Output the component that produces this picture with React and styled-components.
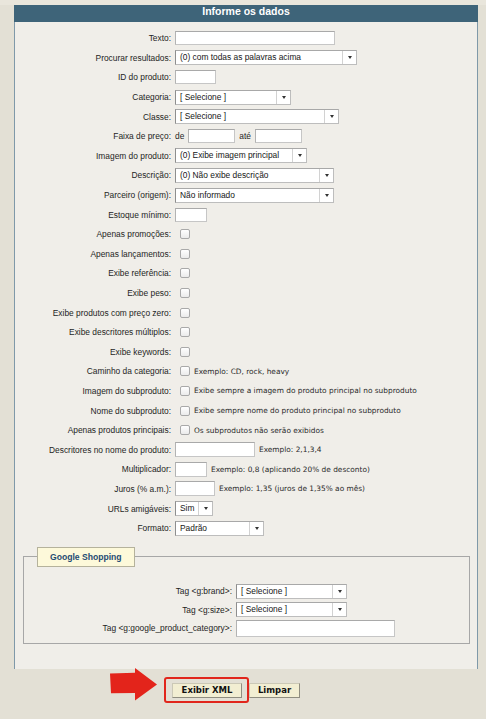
import React from "react";
import styled, { createGlobalStyle } from "styled-components";

const Global = createGlobalStyle`
  html, body { margin: 0; padding: 0; background: #e3e0d5; }
  body { font-family: "Liberation Sans", Arial, sans-serif; }
  #root { width: 486px; }
`;

const Page = styled.div`
  width: 486px;
  height: 719px;
  overflow: hidden;
  box-sizing: border-box;
  background: #e3e0d5;
  border-top: 5px solid #e9e6dc;
`;

const Panel = styled.section`
  width: 464px;
  margin-left: 14px;
  background: #f0eee9;
`;

const Header = styled.h2`
  margin: 0;
  height: 17px;
  line-height: 17px;
  background: #3e6479;
  color: #ffffff;
  text-align: center;
  font: bold 10.5px "Liberation Sans", Arial, sans-serif;
`;

const Body = styled.div`
  border-left: 1px solid #7f99a9;
  border-right: 1px solid #7f99a9;
  padding: 6.5px 0 24.5px;
`;

const Grid = styled.div`
  display: grid;
  grid-template-columns: ${(p) => p.$label}px 1fr;
  column-gap: ${(p) => p.$gap}px;
  grid-auto-rows: ${(p) => p.$row}px;
  align-items: center;
`;

const Label = styled.div`
  text-align: right;
  white-space: nowrap;
  font-size: 8.4px;
  color: #1e1e1e;
`;

const Control = styled.div`
  display: flex;
  align-items: center;
  gap: 4px;
  white-space: nowrap;
`;

const Word = styled.span`
  font-size: 8.4px;
  color: #1e1e1e;
`;

const Hint = styled.span`
  font: 7.4px "DejaVu Sans", Verdana, sans-serif;
  color: #2a2a2a;
`;

const TextInput = styled.input`
  width: ${(p) => p.$w}px;
  height: ${(p) => p.$h || 14}px;
  box-sizing: border-box;
  margin: 0;
  padding: 0;
  background: #ffffff;
  border: 1px solid #c6c6c6;
  border-top-color: #a9a9a9;
  border-left-color: #b3b3b3;
  border-radius: 0;
  outline: none;
`;

const SelectBox = styled.div`
  width: ${(p) => p.$w}px;
  height: 15px;
  box-sizing: border-box;
  display: flex;
  align-items: stretch;
  background: #ffffff;
  border: 1px solid #bdbdbd;
  border-top-color: #a8a8a8;
  border-left-color: #8e8e8e;
  font-size: 8.4px;
  color: #161616;
`;

const SelectText = styled.span`
  flex: 1;
  padding-left: 4px;
  line-height: 13px;
  overflow: hidden;
  white-space: nowrap;
`;

const SelectArrow = styled.span`
  width: 13px;
  border-left: 1px solid #d2d2d2;
  display: flex;
  align-items: center;
  justify-content: center;
  &::after {
    content: "";
    border-left: 2px solid transparent;
    border-right: 2px solid transparent;
    border-top: 3px solid #333333;
  }
`;

const Check = styled.span`
  width: 10px;
  height: 10px;
  box-sizing: border-box;
  margin-left: 5px;
  border: 1px solid #a9a9a9;
  border-radius: 2px;
  background: linear-gradient(#ffffff, #ebebeb);
`;

const Fieldset = styled.fieldset`
  margin: 9px 7px 0 8px;
  padding: 15px 0 6px;
  border: 1px solid #a7a7a7;
  min-width: 0;
`;

const Legend = styled.legend`
  margin-left: 13px;
  padding: 4px 12px 4px;
  box-sizing: border-box;
  line-height: 9px;
  border: 1px solid #b5b29c;
  background: #fdf9da;
  color: #1f4b73;
  font: bold 8.6px "Liberation Sans", Arial, sans-serif;
`;

const ButtonBar = styled.div`
  display: flex;
  align-items: flex-start;
  padding-left: 110px;
  margin-top: 8px;
`;

const Arrow = styled.svg`
  flex: none;
  margin-top: -9px;
  margin-right: 6px;
`;

const Highlight = styled.div`
  border: 2px solid #e1261c;
  border-radius: 3px;
  padding: 4px 5px 3px 6px;
  display: flex;
`;

const Button = styled.button`
  width: ${(p) => p.$w}px;
  height: 15px;
  box-sizing: border-box;
  margin: 0;
  margin-top: ${(p) => p.$top || 0}px;
  padding: 0;
  background: #f2eed2;
  border: 1px solid;
  border-color: #cbc8b6 #8f8d80 #8f8d80 #cbc8b6;
  color: #111111;
  font: bold 8.5px "DejaVu Sans", Verdana, sans-serif;
  line-height: 13px;
`;

const Select = ({ w, children }) => (
  <SelectBox $w={w}>
    <SelectText>{children}</SelectText>
    <SelectArrow />
  </SelectBox>
);

const rows = [
  ["Texto:", <TextInput $w={160} />],
  ["Procurar resultados:", <Select w={182}>(0) com todas as palavras acima</Select>],
  ["ID do produto:", <TextInput $w={41} />],
  ["Categoria:", <Select w={116}>[ Selecione ]</Select>],
  ["Classe:", <Select w={164}>[ Selecione ]</Select>],
  [
    "Faixa de preço:",
    <>
      <Word>de</Word>
      <TextInput $w={47} />
      <Word>até</Word>
      <TextInput $w={47} />
    </>,
  ],
  ["Imagem do produto:", <Select w={132}>(0) Exibe imagem principal</Select>],
  ["Descrição:", <Select w={159}>(0) Não exibe descrição</Select>],
  ["Parceiro (origem):", <Select w={159}>Não informado</Select>],
  ["Estoque mínimo:", <TextInput $w={32} />],
  ["Apenas promoções:", <Check />],
  ["Apenas lançamentos:", <Check />],
  ["Exibe referência:", <Check />],
  ["Exibe peso:", <Check />],
  ["Exibe produtos com preço zero:", <Check />],
  ["Exibe descritores múltiplos:", <Check />],
  ["Exibe keywords:", <Check />],
  ["Caminho da categoria:", <><Check /><Hint>Exemplo: CD, rock, heavy</Hint></>],
  ["Imagem do subproduto:", <><Check /><Hint>Exibe sempre a imagem do produto principal no subproduto</Hint></>],
  ["Nome do subproduto:", <><Check /><Hint>Exibe sempre nome do produto principal no subproduto</Hint></>],
  ["Apenas produtos principais:", <><Check /><Hint>Os subprodutos não serão exibidos</Hint></>],
  ["Descritores no nome do produto:", <><TextInput $w={80} $h={15} /><Hint>Exemplo: 2,1,3,4</Hint></>],
  ["Multiplicador:", <><TextInput $w={32} $h={15} /><Hint>Exemplo: 0,8 (aplicando 20% de desconto)</Hint></>],
  ["Juros (% a.m.):", <><TextInput $w={40} $h={15} /><Hint>Exemplo: 1,35 (juros de 1,35% ao mês)</Hint></>],
  ["URLs amigáveis:", <Select w={38}>Sim</Select>],
  ["Formato:", <Select w={89}>Padrão</Select>],
];

const googleRows = [
  ["Tag <g:brand>:", <Select w={111}>[ Selecione ]</Select>],
  ["Tag <g:size>:", <Select w={111}>[ Selecione ]</Select>],
  ["Tag <g:google_product_category>:", <TextInput $w={159} $h={17} />],
];

export default function App() {
  return (
    <Page>
      <Global />
      <Panel>
        <Header>Informe os dados</Header>
        <Body>
          <Grid $label={156} $gap={4} $row={19.6}>
            {rows.map(([label, control]) => (
              <React.Fragment key={label}>
                <Label>{label}</Label>
                <Control>{control}</Control>
              </React.Fragment>
            ))}
          </Grid>
          <Fieldset>
            <Legend>Google Shopping</Legend>
            <Grid $label={208} $gap={4} $row={18.5}>
              {googleRows.map(([label, control]) => (
                <React.Fragment key={label}>
                  <Label>{label}</Label>
                  <Control>{control}</Control>
                </React.Fragment>
              ))}
            </Grid>
          </Fieldset>
        </Body>
      </Panel>
      <ButtonBar>
        <Arrow width="48" height="33" viewBox="0 0 48 33">
          <polygon points="0,5.5 25,4.8 25,0 47,16.5 25,32.5 25,25 1,25.2" fill="#e3241b" />
        </Arrow>
        <Highlight>
          <Button $w={70}>Exibir XML</Button>
        </Highlight>
        <Button $w={51} $top={6}>Limpar</Button>
      </ButtonBar>
    </Page>
  );
}
